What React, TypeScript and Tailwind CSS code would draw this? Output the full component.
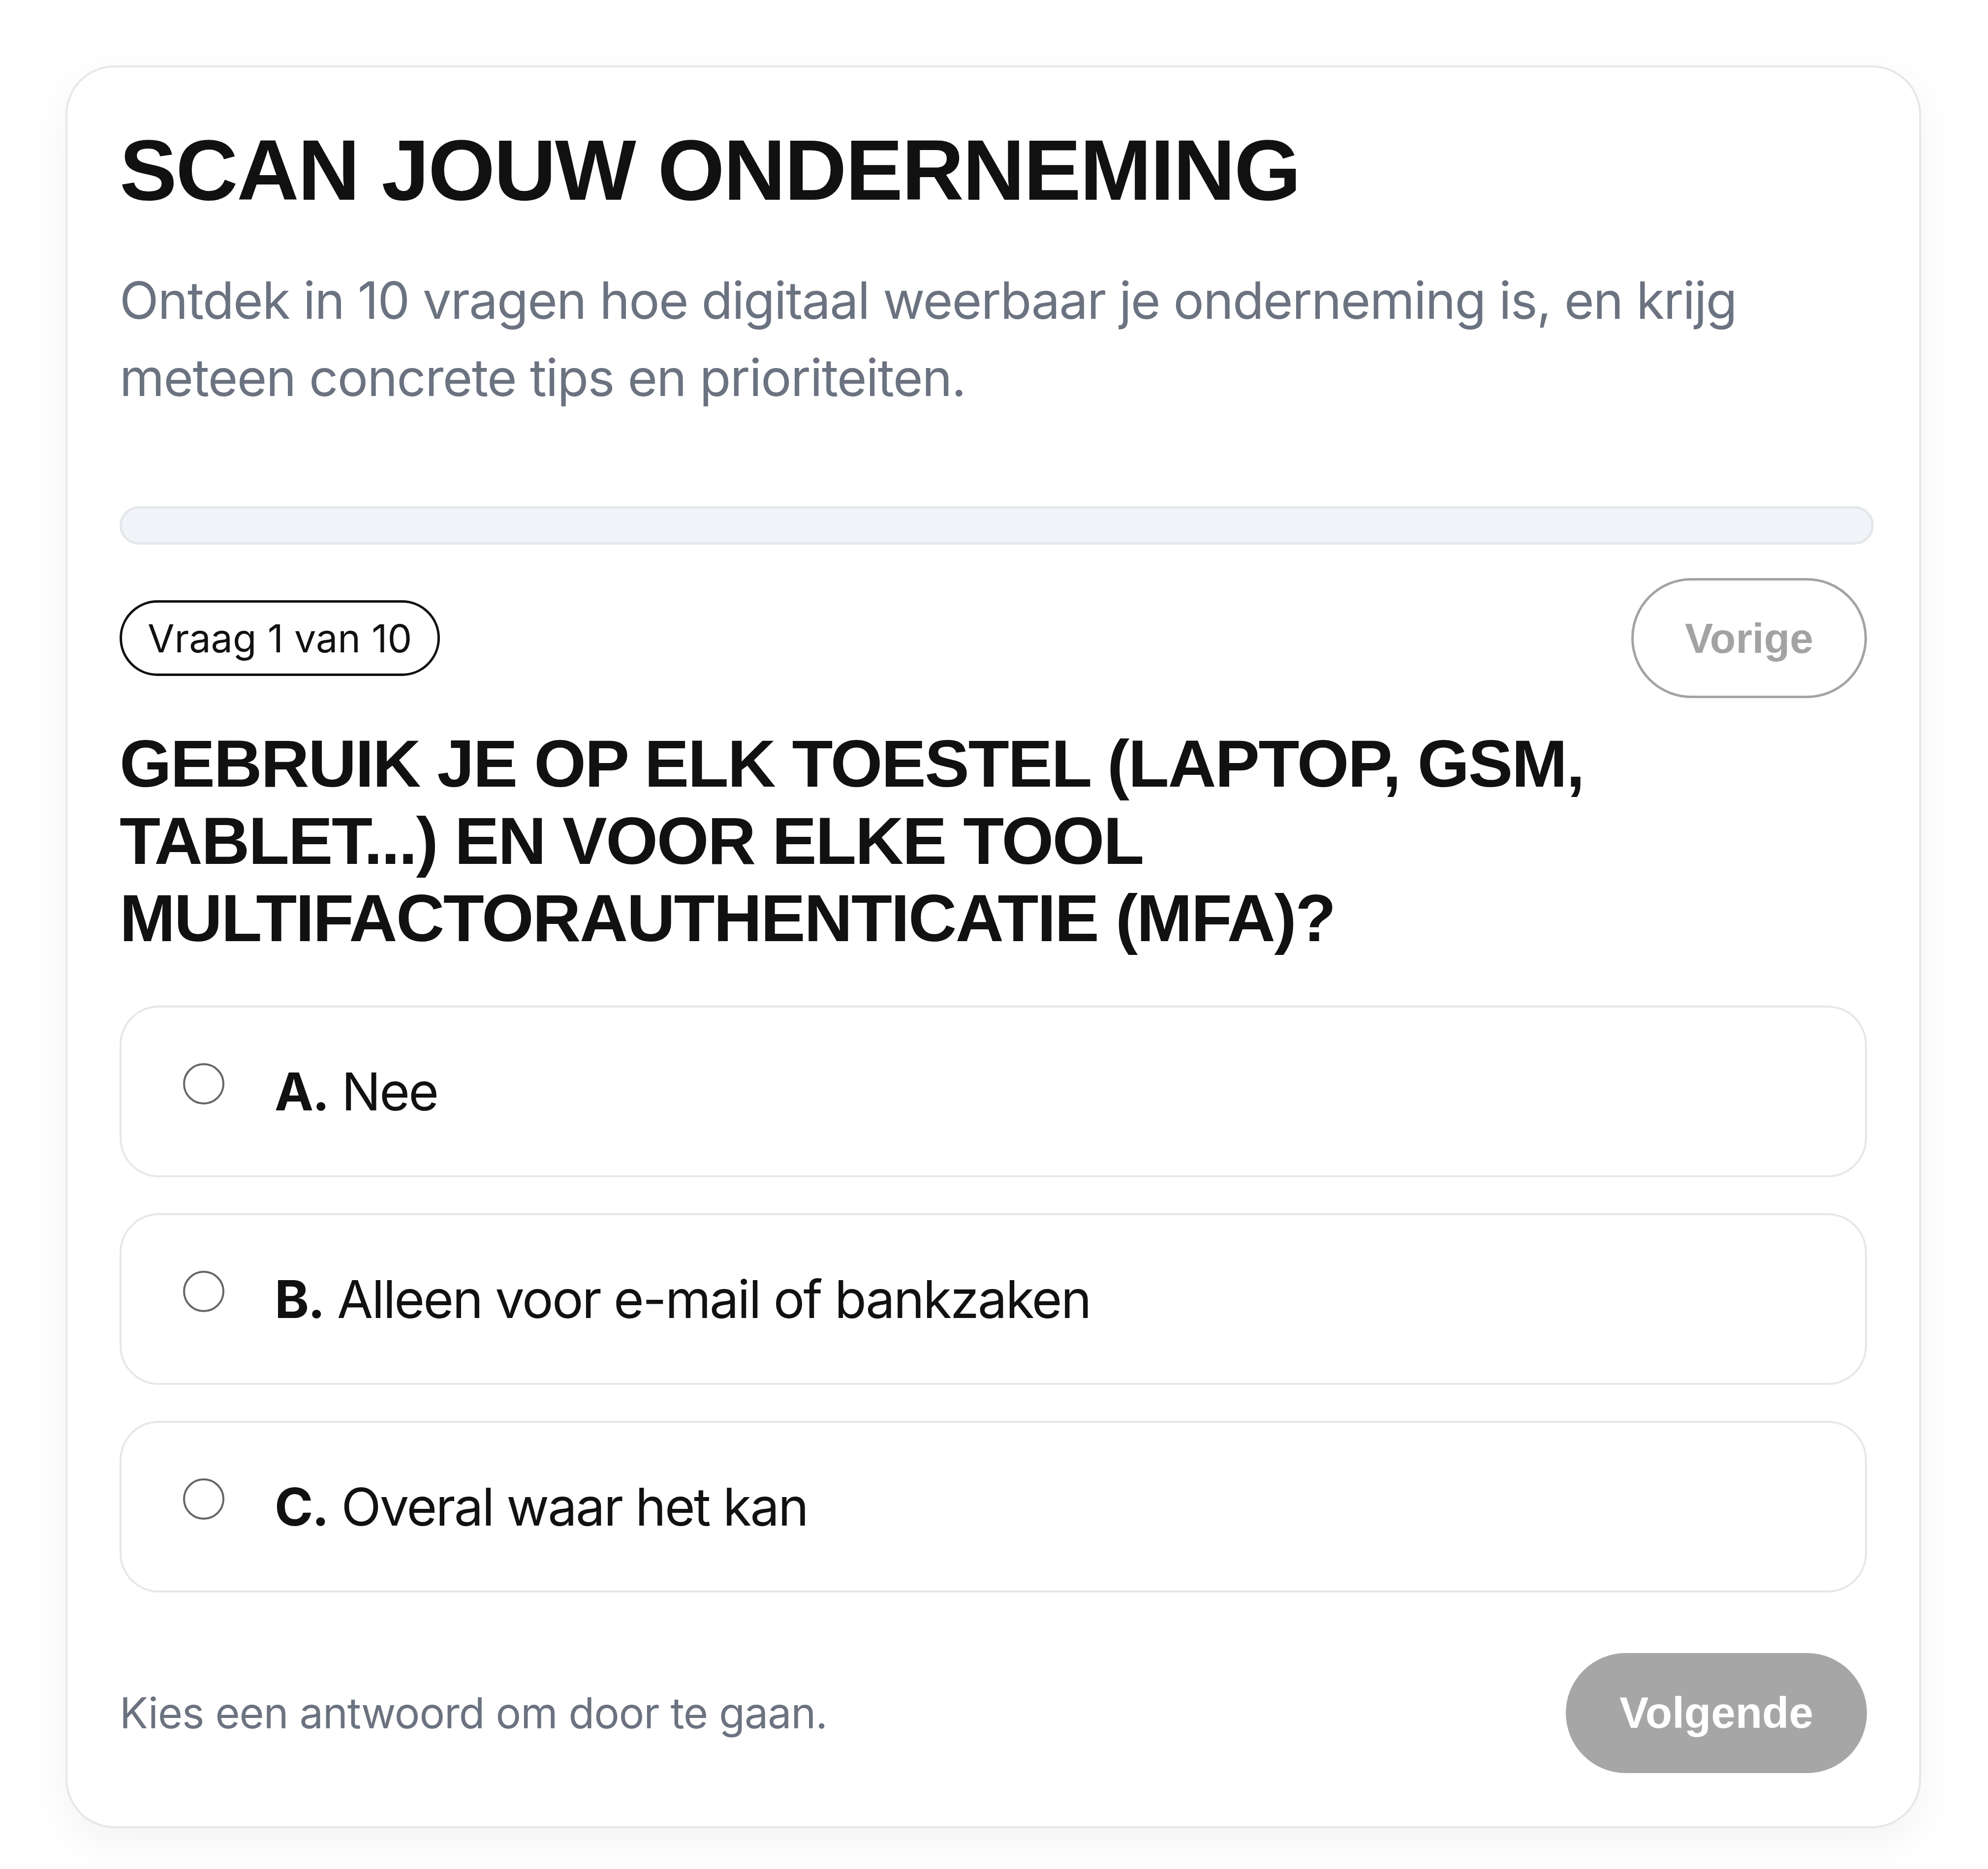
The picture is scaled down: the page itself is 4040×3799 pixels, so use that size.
const answers = [
  { letter: "A", label: "Nee" },
  { letter: "B", label: "Alleen voor e-mail of bankzaken" },
  { letter: "C", label: "Overal waar het kan" },
];

function AnswerOption({ letter, label }: { letter: string; label: string }) {
  return (
    <label className="flex items-start gap-[102px] rounded-[80px] border-[4px] border-[#e5e7eb] bg-white pl-[125px] pr-[120px] py-[88px] cursor-pointer">
      <span className="mt-[25px] h-[84px] w-[84px] shrink-0 rounded-full border-[4px] border-[#666666] bg-white" />
      <span className="text-[106px] leading-[165px] tracking-[-0.026em] text-[#111111]">
        <span className="font-bold">{letter}.</span> {label}
      </span>
    </label>
  );
}

export default function App() {
  return (
    <div
      className="min-h-screen bg-white pl-[133px] pt-[133px] pb-[80px]"
      style={{ fontFamily: "Inter, 'Noto Sans', sans-serif" }}
    >
      <div className="w-[3771px] rounded-[100px] border-[4px] border-[#e5e7eb] bg-white px-[106px] pt-[104px] pb-[108px] shadow-[0_30px_90px_rgba(0,0,0,0.05)]">
        <h1
          className="text-[175px] font-bold leading-[210px] tracking-[-0.014em] text-[#111111]"
          style={{ fontFamily: "'Liberation Sans', Arial, sans-serif" }}
        >
          SCAN JOUW ONDERNEMING
        </h1>
        <p className="mt-[81px] text-[104px] leading-[157px] tracking-[-0.016em] text-[#6b7280]">
          Ontdek in 10 vragen hoe digitaal weerbaar je onderneming is, en krijg
          <br />
          meteen concrete tips en prioriteiten.
        </p>

        {/* progress */}
        <div className="mt-[183px] h-[78px] w-[calc(100%+14px)] rounded-full border-[5px] border-[#e5e7eb] bg-[#f1f4f8]" />

        <div className="mt-[68px] flex items-center justify-between">
          <span className="rounded-full border-[5px] border-[#111111] px-[52px] py-[30px] text-[79px] leading-[84px] text-[#111111]">
            Vraag 1 van 10
          </span>
          <button
            className="h-[244px] w-[479px] rounded-full border-[5px] border-[#a3a3a3] bg-white text-[86px] font-bold text-[#a3a3a3]"
            style={{ fontFamily: "'Liberation Sans', Arial, sans-serif" }}
          >
            Vorige
          </button>
        </div>

        <h2
          className="mt-[55px] text-[136px] font-bold leading-[157px] tracking-[-0.018em] text-[#111111]"
          style={{ fontFamily: "'Liberation Sans', Arial, sans-serif" }}
        >
          GEBRUIK JE OP ELK TOESTEL (LAPTOP, GSM,
          <br />
          TABLET...) EN VOOR ELKE TOOL
          <br />
          MULTIFACTORAUTHENTICATIE (MFA)?
        </h2>

        <div className="mt-[99px] flex flex-col gap-[73px]">
          {answers.map((a) => (
            <AnswerOption key={a.letter} letter={a.letter} label={a.label} />
          ))}
        </div>

        <div className="mt-[123px] flex items-center justify-between">
          <span className="text-[86px] tracking-[-0.012em] text-[#6b7280]">Kies een antwoord om door te gaan.</span>
          <button
            className="h-[244px] w-[612px] rounded-full bg-[#a6a6a6] text-[89px] font-bold text-white"
            style={{ fontFamily: "'Liberation Sans', Arial, sans-serif" }}
          >
            Volgende
          </button>
        </div>
      </div>
    </div>
  );
}
